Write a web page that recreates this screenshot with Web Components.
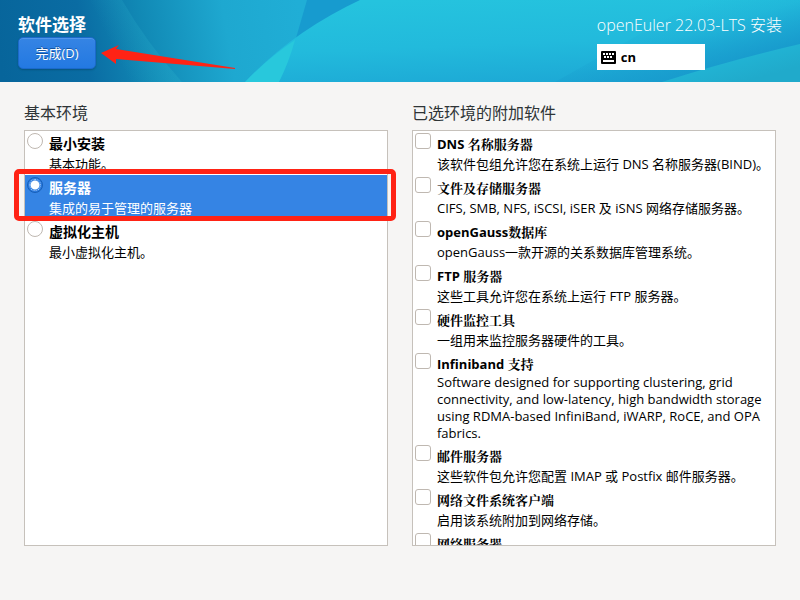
<!DOCTYPE html>
<html lang="zh-CN">
<head>
<meta charset="utf-8">
<title>软件选择</title>
<style>
  html, body { height: 100%; }
  body {
    margin: 0;
    background: #f6f5f4;
    color: #000;
    font: 13px/20px "Open Sans", "Noto Sans CJK SC", sans-serif;
  }
</style>
</head>
<body>
<installer-page>
  <installer-header slot="header" heading="软件选择" product="openEuler 22.03-LTS 安装" layout="cn"></installer-header>

  <option-list label="基本环境">
    <option-row type="radio" name="最小安装">基本功能。</option-row>
    <option-row type="radio" name="服务器" selected>集成的易于管理的服务器</option-row>
    <option-row type="radio" name="虚拟化主机">最小虚拟化主机。</option-row>
  </option-list>

  <option-list label="已选环境的附加软件" scroll>
    <option-row type="checkbox" name="DNS 名称服务器">该软件包组允许您在系统上运行 DNS 名称服务器(BIND)。</option-row>
    <option-row type="checkbox" name="文件及存储服务器">CIFS, SMB, NFS, iSCSI, iSER 及 iSNS 网络存储服务器。</option-row>
    <option-row type="checkbox" name="openGauss数据库">openGauss一款开源的关系数据库管理系统。</option-row>
    <option-row type="checkbox" name="FTP 服务器">这些工具允许您在系统上运行 FTP 服务器。</option-row>
    <option-row type="checkbox" name="硬件监控工具">一组用来监控服务器硬件的工具。</option-row>
    <option-row type="checkbox" name="Infiniband 支持" lang="en">Software designed for supporting clustering, grid connectivity, and low-latency, high bandwidth storage using RDMA-based InfiniBand, iWARP, RoCE, and OPA fabrics.</option-row>
    <option-row type="checkbox" name="邮件服务器">这些软件包允许您配置 IMAP 或 Postfix 邮件服务器。</option-row>
    <option-row type="checkbox" name="网络文件系统客户端">启用该系统附加到网络存储。</option-row>
    <option-row type="checkbox" name="网络服务器"></option-row>
  </option-list>
</installer-page>

<script>
class InstallerPage extends HTMLElement {
  constructor() {
    super();
    this.attachShadow({ mode: "open" });
  }

  connectedCallback() {
    this.shadowRoot.innerHTML = /* html */`
<style>
  :host {
    display: flex;
    flex-direction: column;
    height: 100vh;
  }
  main {
    flex: 1;
    min-height: 0;
    box-sizing: border-box;
    display: grid;
    grid-template-columns: 1fr 1fr;
    grid-template-rows: minmax(0, 1fr);
    gap: 24px;
    padding: 19px 24px 54px;
  }
</style>
<slot name="header"></slot>
<main><slot></slot></main>`;
  }
}

class HeaderArt extends HTMLElement {
  constructor() {
    super();
    this.attachShadow({ mode: "open" });
  }

  connectedCallback() {
    this.shadowRoot.innerHTML = /* html */`
<style>
  :host { display: block; }
  svg { display: block; width: 100%; height: 100%; }
</style>
<svg viewBox="0 0 800 82" preserveAspectRatio="none" aria-hidden="true">
  <defs>
    <linearGradient id="base" gradientUnits="userSpaceOnUse" x1="0" y1="60" x2="300" y2="10">
      <stop offset="0" stop-color="#07659b"/>
      <stop offset=".28" stop-color="#0a6ca3"/>
      <stop offset=".48" stop-color="#1189b5"/>
      <stop offset=".75" stop-color="#1ea8d0"/>
      <stop offset="1" stop-color="#20aed6"/>
    </linearGradient>
    <linearGradient id="beam" gradientUnits="userSpaceOnUse" x1="112" y1="46" x2="148" y2="28">
      <stop offset="0" stop-color="#2bb0cc" stop-opacity="0"/>
      <stop offset="1" stop-color="#2bb0cc" stop-opacity=".28"/>
    </linearGradient>
    <linearGradient id="wave" gradientUnits="userSpaceOnUse" x1="400" y1="0" x2="404" y2="96">
      <stop offset="0" stop-color="#25c3de"/>
      <stop offset=".5" stop-color="#22badc"/>
      <stop offset="1" stop-color="#1ca6d4"/>
    </linearGradient>
    <linearGradient id="shade" gradientUnits="userSpaceOnUse" x1="675" y1="10" x2="695" y2="76">
      <stop offset="0" stop-color="#189bcd" stop-opacity="0"/>
      <stop offset=".4" stop-color="#189bcd" stop-opacity=".2"/>
      <stop offset="1" stop-color="#189bcd"/>
    </linearGradient>
    <linearGradient id="wedge" gradientUnits="userSpaceOnUse" x1="720" y1="50" x2="730" y2="86">
      <stop offset="0" stop-color="#22b8d8"/>
      <stop offset="1" stop-color="#20aacb"/>
    </linearGradient>
  </defs>
  <rect width="800" height="82" fill="url(#base)"/>
  <path d="M86 0H122Q146 42 182 82H112Z" fill="url(#beam)"/>
  <path d="M307 0H364L294 45Z" fill="#179bcf"/>
  <path d="M245 82Q292 32 360 0H800V82Z" fill="url(#wave)"/>
  <path d="M245 82Q268 58 295 40Q289 62 279 82Z" fill="#28c8dc"/>
  <path d="M555 82L700 0H800V82Z" fill="url(#shade)"/>
  <path d="M662 82Q730 60 800 44V82Z" fill="url(#wedge)"/>
</svg>`;
  }
}

class InstallerHeader extends HTMLElement {
  constructor() {
    super();
    this.attachShadow({ mode: "open" });
  }

  connectedCallback() {
    this.shadowRoot.innerHTML = /* html */`
<style>
  :host {
    display: flex;
    justify-content: space-between;
    align-items: flex-start;
    box-sizing: border-box;
    height: 82px;
    padding: 13px 18px;
    position: relative;
    color: #fff;
  }
  header-art {
    position: absolute;
    inset: 0;
    z-index: -1;
  }
  h1 {
    margin: 0;
    font-size: 17px;
    line-height: 24px;
  }
  button {
    display: block;
    height: 32px;
    min-width: 78px;
    padding: 0 16px;
    border: 1px solid #1b6acb;
    border-radius: 5px;
    background: linear-gradient(#3584e4, #2379e2);
    box-shadow: inset 0 1px #4f96ea, 0 1px 2px #0003;
    color: #fff;
    font: inherit;
    text-shadow: 0 -1px #0b3f80b0;
  }
  .product {
    font-size: 16px;
    font-weight: 300;
    line-height: 24px;
    margin-bottom: 7px;
  }
  .layout {
    display: flex;
    align-items: center;
    gap: 5px;
    box-sizing: border-box;
    width: 108px;
    height: 26px;
    padding: 0 4px;
    background: #fff;
    color: #000;
    font-weight: bold;
  }
  .arrow {
    position: absolute;
    left: 101px;
    top: 44px;
  }
</style>
<header-art></header-art>
<div>
  <h1>${this.getAttribute("heading")}</h1>
  <button type="button">完成(D)</button>
</div>
<div>
  <div class="product">${this.getAttribute("product")}</div>
  <div class="layout">
    <svg width="15" height="13" viewBox="0 0 15 13" aria-hidden="true">
      <rect width="15" height="13" rx="1"/>
      <path d="M2 2h2v2H2zM5 2h2v2H5zM8 2h2v2H8zM11 2h2v2h-2zM3 5h2v2H3zM6 5h2v2H6zM9 5h2v2H9zM2 9h11v2H2z" fill="#fff"/>
    </svg>
    <span>${this.getAttribute("layout")}</span>
  </div>
</div>
<svg class="arrow" width="136" height="26" aria-hidden="true">
  <path d="M0 9L18 1L15 5L134 24V25L15 15L15 20Z" fill="#ff2315"/>
</svg>`;
  }
}

class OptionList extends HTMLElement {
  constructor() {
    super();
    this.attachShadow({ mode: "open" });
  }

  connectedCallback() {
    this.shadowRoot.innerHTML = /* html */`
<style>
  :host {
    display: flex;
    flex-direction: column;
    min-width: 0;
    min-height: 0;
  }
  h2 {
    margin: 0 0 5px;
    font-size: 16px;
    line-height: 24px;
    font-weight: normal;
    color: #2e3436;
  }
  .rows {
    flex: 1;
    min-height: 0;
    border: 1px solid #c6c1bb;
    background: #fff;
  }
  :host([scroll]) .rows { overflow: hidden; }
</style>
<h2 id="label">${this.getAttribute("label")}</h2>
<div class="rows" role="group" aria-labelledby="label"><slot></slot></div>`;
  }
}

class OptionRow extends HTMLElement {
  constructor() {
    super();
    this.attachShadow({ mode: "open" });
  }

  static get styles() {
    return /* css */`
      :host {
        display: block;
        position: relative;
        padding: 2px 2px 1px;
      }
      label {
        display: flex;
        align-items: flex-start;
        gap: 6px;
      }
      .text {
        flex: 1;
        min-width: 0;
        padding-top: 1px;
      }
      .name, .about { display: block; }
      .name { font-weight: bold; }
      .radio .name { font-size: 14px; }
      .checkbox .name { font-family: "Open Sans", "Noto Serif CJK SC", "Noto Sans CJK SC", serif; }
      :host([lang="en"]) .about { line-height: 17px; }
      input {
        appearance: none;
        flex: none;
        width: 16px;
        height: 16px;
        margin: 0;
        border: 1px solid #bfb8b1;
        border-radius: 3px;
        background: #fff;
      }
      .radio input { border-radius: 50%; }
      .radio input:checked {
        border-color: #185fb8;
        background: radial-gradient(circle, #fff 4px, #2a7be0 5px);
        outline: 1px dotted #b8d4f6;
        outline-offset: -3px;
      }
      :host([selected]) {
        background: #3584e4;
        color: #fff;
      }
      /* red marker round the chosen row */
      :host([selected])::after {
        content: "";
        position: absolute;
        inset: -6px -9px -2px -11px;
        border: 5px solid #ff2315;
        border-radius: 5px;
        pointer-events: none;
        z-index: 1;
      }
    `;
  }

  connectedCallback() {
    const type = this.getAttribute("type");
    const checked = this.hasAttribute("selected") ? "checked" : "";
    this.shadowRoot.innerHTML = /* html */`
<style>${OptionRow.styles}</style>
<label class="${type}">
  <input type="${type}" ${checked}>
  <span class="text">
    <span class="name">${this.getAttribute("name")}</span>
    <span class="about"><slot></slot></span>
  </span>
</label>`;
  }
}

customElements.define("installer-page", InstallerPage);
customElements.define("header-art", HeaderArt);
customElements.define("installer-header", InstallerHeader);
customElements.define("option-list", OptionList);
customElements.define("option-row", OptionRow);
</script>
</body>
</html>
